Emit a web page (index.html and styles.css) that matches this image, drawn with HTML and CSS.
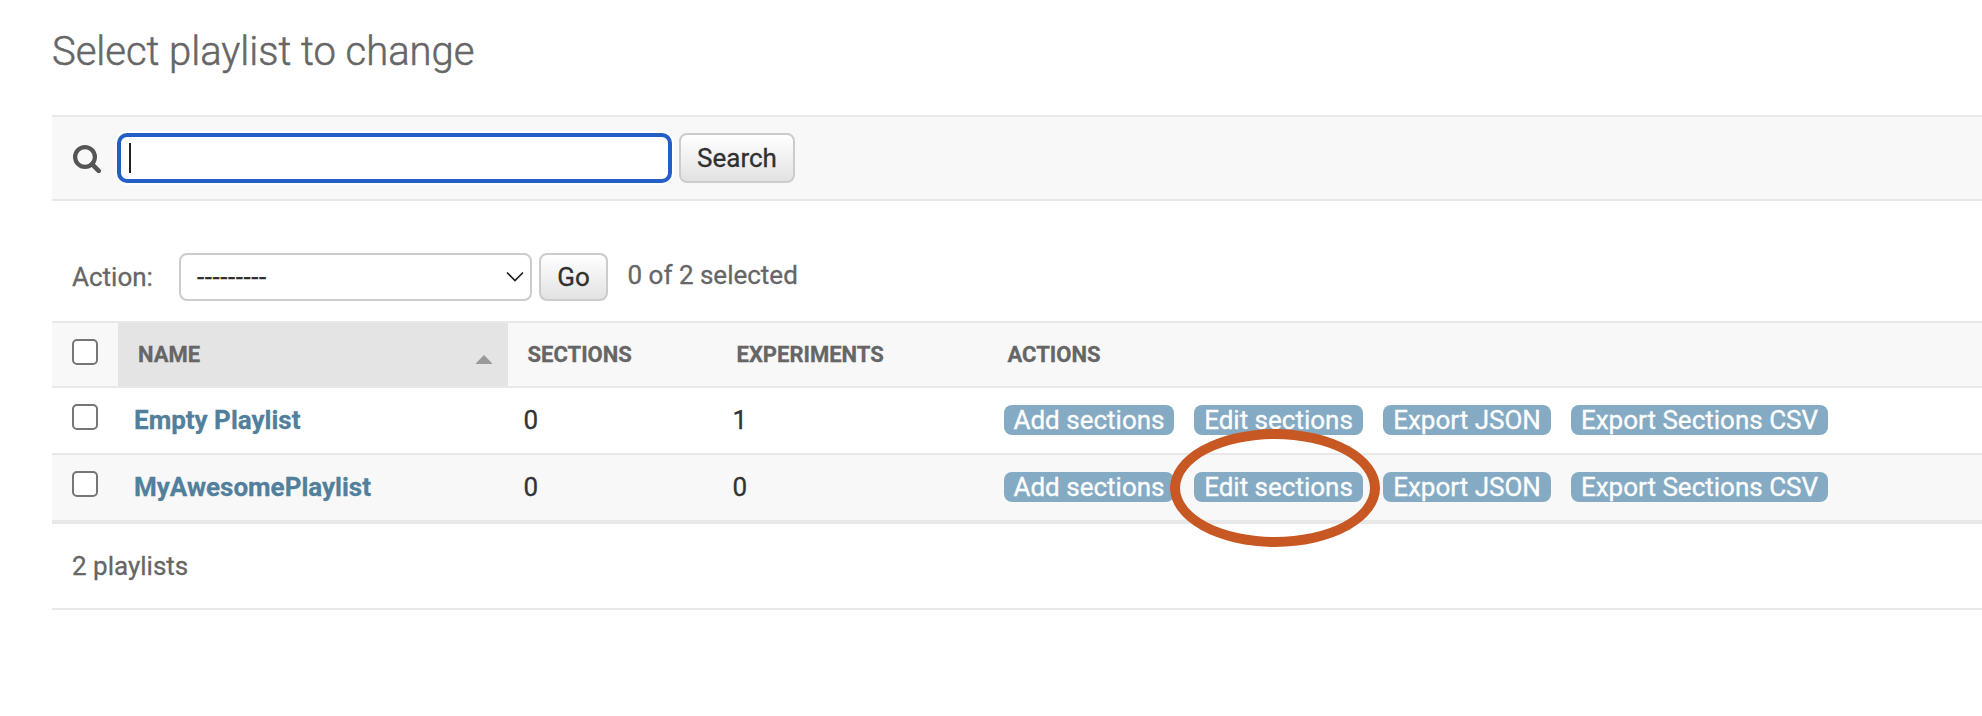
FILE: index.html
```html
<!DOCTYPE html>
<html lang="en">
<head>
<meta charset="utf-8">
<title>Select playlist to change</title>
<link rel="stylesheet" href="styles.css">
</head>
<body>
<main class="content">
  <h1 class="title">Select playlist to change</h1>
  <form class="toolbar">
    <svg class="search-icon" width="28" height="28" viewBox="0 0 28 28" fill="none" stroke="#555"><circle cx="12" cy="12" r="9.9" stroke-width="4.2"/><path d="M19 19.2L25.7 25.9" stroke-width="4.6" stroke-linecap="round"/></svg>
    <div class="search-input"><span class="caret"></span></div>
    <button type="button" class="button search-button">Search</button>
  </form>
  <div class="actions">
    <span class="action-label">Action:</span>
    <div class="select"><span class="select-value">---------</span>
      <svg width="18" height="12" viewBox="0 0 18 12" fill="none" stroke="#222" stroke-width="1.7"><path d="M1 1.5L9 9.5L17 1.5"/></svg>
    </div>
    <button type="button" class="button go-button">Go</button>
    <span class="counter">0 of 2 selected</span>
  </div>
  <section class="results">
    <div class="row head">
      <div class="check-cell"><span class="checkbox"></span></div>
      <div class="cell sorted"><span>Name</span><svg class="sort" width="16" height="9" viewBox="0 0 16 9"><path d="M8 0L16 8.2V9H0V8.2Z" fill="#999"/></svg></div>
      <div class="cell">Sections</div>
      <div class="cell">Experiments</div>
      <div class="cell">Actions</div>
    </div>
    <div class="row">
      <div class="check-cell"><span class="checkbox"></span></div>
      <div class="cell name">Empty Playlist</div>
      <div class="cell">0</div>
      <div class="cell">1</div>
      <div class="cell links"><a class="badge add">Add sections</a><a class="badge edit">Edit sections</a><a class="badge json">Export JSON</a><a class="badge csv">Export Sections CSV</a></div>
    </div>
    <div class="row alt">
      <div class="check-cell"><span class="checkbox"></span></div>
      <div class="cell name">MyAwesomePlaylist</div>
      <div class="cell">0</div>
      <div class="cell">0</div>
      <div class="cell links"><a class="badge add">Add sections</a><a class="badge edit">Edit sections<span class="ring"></span></a><a class="badge json">Export JSON</a><a class="badge csv">Export Sections CSV</a></div>
    </div>
  </section>
  <p class="paginator">2 playlists</p>
</main>
</body>
</html>
```
FILE: styles.css
```css
* { box-sizing: border-box; }
body {
  margin: 0;
  height: 716px;
  overflow: hidden;
  background: #fff;
  color: #333;
  font: 26px/30px Roboto, sans-serif;
  -webkit-text-stroke: 0.3px;
}
.content { padding: 28px 0 0 52px; }
.title {
  margin: 0 0 39px;
  height: 48px;
  font-size: 40px;
  line-height: 48px;
  font-weight: 300;
  color: #666;
  letter-spacing: -0.03px;
  -webkit-text-stroke: 0.5px;
}
.toolbar {
  display: flex;
  align-items: flex-start;
  height: 86px;
  padding: 16px 0 0 21px;
  background: #f8f8f8;
  border-top: 2px solid #e8e8e8;
  border-bottom: 2px solid #e8e8e8;
}
.search-icon { margin: 12px 16px 0 0; }
.search-input {
  width: 555px;
  height: 50px;
  padding: 6px 8px;
  background: #fff;
  border: 4px solid #265ec8;
  border-radius: 10px;
  box-shadow: 0 0 0 2px #fff;
}
.caret { display: block; width: 2px; height: 30px; background: #222; }
.button {
  padding: 0;
  border: 2px solid #ccc;
  border-radius: 8px;
  background: linear-gradient(#fff, #e2e2e2);
  color: #303030;
  font: 26px/30px Roboto, sans-serif;
}
.search-button { width: 116px; height: 50px; margin-left: 7px; }
.actions {
  display: flex;
  height: 120px;
  padding: 52px 0 0 20px;
  color: #666;
}
.action-label { width: 107px; padding-top: 9px; }
.select {
  display: flex;
  justify-content: space-between;
  width: 353px;
  height: 48px;
  padding: 7px 6px 0 16px;
  border: 2px solid #ccc;
  border-radius: 8px;
  color: #303030;
}
.select-value { letter-spacing: 0.55px; }
.select svg { margin-top: 9px; }
.go-button { width: 69px; height: 48px; margin-left: 7px; }
.counter { margin-left: 19.5px; padding-top: 7px; }
.results { border-bottom: 2px solid #e8e8e8; }
.row {
  display: grid;
  grid-template-columns: 66px 390px 209px 271px 1fr;
  height: 67px;
  border-bottom: 2px solid #e8e8e8;
}
.row .cell { padding: 17px 16px 0 15.5px; }
.row .name, .row .links { padding-left: 16px; }
.check-cell { padding: 16px 0 0 20px; }
.checkbox {
  display: block;
  width: 26px;
  height: 26px;
  border: 2px solid #767676;
  border-radius: 5px;
  background: #fff;
}
.head {
  background: #f8f8f8;
  border-top: 2px solid #e8e8e8;
  font-size: 22px;
  font-weight: 700;
  text-transform: uppercase;
  color: #666;
}
.row.head .cell { padding: 17px 20px 0 19.5px; }
.row.head .sorted {
  display: flex;
  justify-content: space-between;
  padding-left: 20px;
  padding-right: 16px;
  background: #e4e4e4;
}
.sort { margin-top: 15px; }
.alt { background: #f8f8f8; }
.name { font-weight: 700; color: #527f9b; }
.links { display: flex; gap: 20px; }
.badge {
  position: relative;
  height: 30px;
  border-radius: 8px;
  background: #85abc4;
  color: #fff;
  text-align: center;
  white-space: nowrap;
}
.add { width: 170px; }
.edit { width: 169px; }
.json { width: 168px; }
.csv { width: 257px; }
.ring {
  position: absolute;
  z-index: 1;
  top: -43px;
  left: -24px;
  width: 210px;
  height: 118px;
  border: 10px solid #c85823;
  border-radius: 50%;
}
.paginator {
  height: 86px;
  margin: 0;
  padding: 27px 0 0 20px;
  border-bottom: 2px solid #e8e8e8;
  color: #666;
}
```
